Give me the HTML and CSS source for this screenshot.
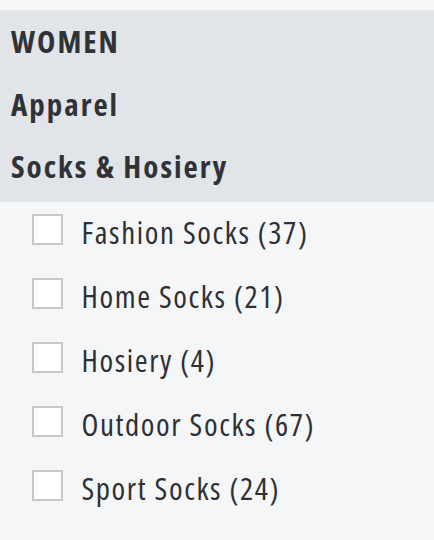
FILE: index.html
```html
<!DOCTYPE html>
<html>
<head>
<meta charset="utf-8">
<link rel="stylesheet" href="styles.css">
</head>
<body>
<nav class="facet">
  <ul class="crumbs">
    <li class="crumb">WOMEN</li>
    <li class="crumb">Apparel</li>
    <li class="crumb">Socks &amp; Hosiery</li>
  </ul>
  <ul class="options">
    <li class="option"><span class="box"></span><span class="label">Fashion Socks (37)</span></li>
    <li class="option"><span class="box"></span><span class="label">Home Socks (21)</span></li>
    <li class="option"><span class="box"></span><span class="label">Hosiery (4)</span></li>
    <li class="option"><span class="box"></span><span class="label">Outdoor Socks (67)</span></li>
    <li class="option"><span class="box"></span><span class="label">Sport Socks (24)</span></li>
  </ul>
</nav>
</body>
</html>
```
FILE: styles.css
```css
html, body {
  margin: 0;
  padding: 0;
  background: #f5f6f8;
}
body {
  font-family: "Open Sans", "Noto Sans", sans-serif;
  font-stretch: 75%;
  font-size: 31px;
  letter-spacing: 1.6px;
  color: #2e3033;
}
.facet {
  padding-top: 10px;
}
.crumbs {
  list-style: none;
  margin: 0;
  padding: 0 0 4.5px 11px;
  background: #e1e4e8;
}
.crumb {
  font-weight: 700;
  letter-spacing: 2px;
  line-height: 62.5px;
  color: #303236;
}
.options {
  list-style: none;
  margin: 0;
  padding: 0;
  display: flex;
  flex-direction: column;
  gap: 4px;
}
.option {
  display: flex;
  align-items: flex-start;
}
.box {
  flex: none;
  width: 31px;
  height: 31px;
  box-sizing: border-box;
  margin: 12px 0 0 32px;
  background: #ffffff;
  border: 2px solid #c7c7c7;
}
.label {
  margin-left: 18.5px;
  line-height: 60px;
  white-space: nowrap;
}
```
